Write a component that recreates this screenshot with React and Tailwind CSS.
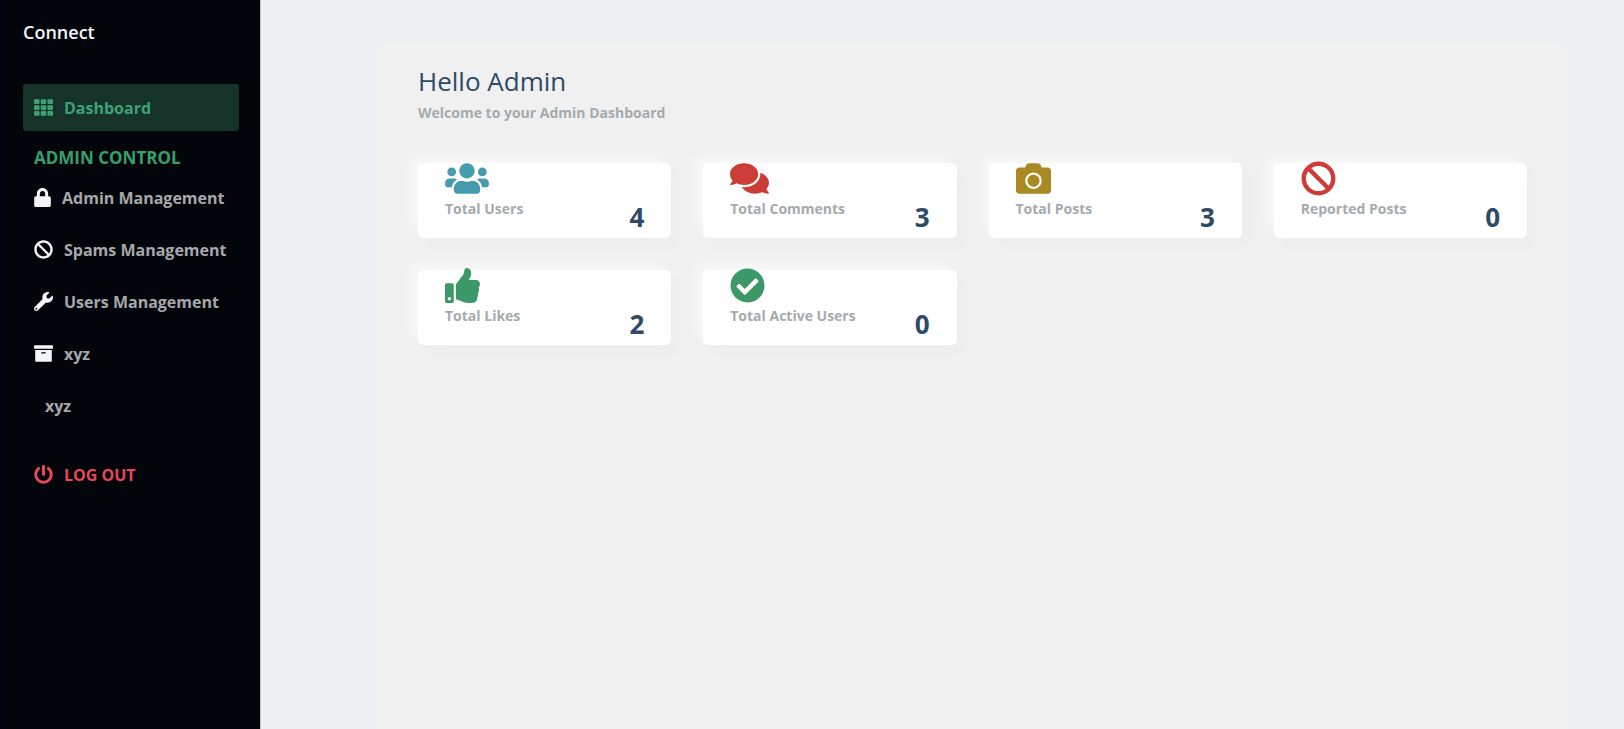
import React from "react";
import {
  FaTh,
  FaLock,
  FaBan,
  FaWrench,
  FaArchive,
  FaPowerOff,
  FaUsers,
  FaComments,
  FaCamera,
  FaThumbsUp,
  FaCheckCircle,
} from "react-icons/fa";

const links = [
  { label: "Admin Management", Icon: FaLock, size: "w-[17px]" },
  { label: "Spams Management", Icon: FaBan, size: "w-[19px]" },
  { label: "Users Management", Icon: FaWrench, size: "w-[19px]" },
  { label: "xyz", Icon: FaArchive, size: "w-[19px]" },
  { label: "xyz", Icon: null },
];

const stats = [
  { label: "Total Users", value: 4, Icon: FaUsers, look: "w-11 text-[#469cac]" },
  { label: "Total Comments", value: 3, Icon: FaComments, look: "w-[39px] text-[#cc3d38]" },
  { label: "Total Posts", value: 3, Icon: FaCamera, look: "w-[35px] text-[#a98921]" },
  { label: "Reported Posts", value: 0, Icon: FaBan, look: "w-[35px] text-[#cc3d38]" },
  { label: "Total Likes", value: 2, Icon: FaThumbsUp, look: "w-[35px] text-[#3d9868]" },
  { label: "Total Active Users", value: 0, Icon: FaCheckCircle, look: "w-[35px] text-[#3d9868]" },
];

function Sidebar() {
  return (
    <aside className="w-[260px] shrink-0 border-l-2 border-[#02031a] bg-[#020509] px-[21px] pt-5">
      <h1 className="text-lg leading-6 font-semibold text-[#f3f4f6]">Connect</h1>
      <nav className="mt-10 flex flex-col text-base font-bold">
        <a
          href="#dashboard"
          className="flex h-[47px] items-center gap-[11px] rounded-[3px] bg-[#16332a] px-[11px] text-[#3ea175]"
        >
          <FaTh size={19} />
          Dashboard
        </a>
        <h2 className="mt-[15px] px-[11px] text-[17px] leading-6 whitespace-nowrap text-[#36a06c]">ADMIN CONTROL</h2>
        <ul className="mt-1 flex flex-col gap-[5px]">
          {links.map(({ label, Icon, size }, i) => (
            <li key={i}>
              <a href="#section" className="flex h-[47px] items-center gap-[11px] px-[11px] whitespace-nowrap text-[#a6a8ab]">
                {Icon ? <Icon className={`h-[19px] shrink-0 text-[#f3f5f8] ${size}`} /> : <span />}
                {label}
              </a>
            </li>
          ))}
        </ul>
        <button type="button" className="mt-[22px] flex h-[47px] items-center gap-[11px] px-[11px] text-left text-[#e8485a]">
          <FaPowerOff size={19} />
          LOG OUT
        </button>
      </nav>
    </aside>
  );
}

function StatCard({ label, value, Icon, look }) {
  return (
    <article className="flex h-[75px] items-end justify-between rounded-[5px] bg-white px-[27px] shadow-[8px_8px_16px_rgba(70,70,70,0.015),-8px_-8px_12px_rgba(255,255,255,0.5)]">
      <div className="flex h-[77px] flex-col items-start">
        <Icon className={`h-[35px] ${look}`} />
        <p className="text-sm leading-[26px] font-bold text-[#a5aaad]">{label}</p>
      </div>
      <p className="text-[26px] leading-[42px] font-bold text-[#2e4a66]">{value}</p>
    </article>
  );
}

export default function App() {
  return (
    <div className="flex min-h-screen bg-[#edeff3] font-['Open_Sans','Noto_Sans',sans-serif]">
      <Sidebar />
      <main className="flex flex-1 border-l border-[#c4c6ca] pt-[45px] pr-[59px] pl-[119px]">
        <section className="flex-1 bg-[#f0f0f0] px-[38px] pt-4">
          <h2 className="text-[26px] leading-10 text-[#2e4a66]">Hello Admin</h2>
          <p className="text-sm leading-6 font-bold text-[#a5aaad]">Welcome to your Admin Dashboard</p>
          <div className="mt-[38px] grid grid-cols-4 gap-8">
            {stats.map((s) => (
              <StatCard key={s.label} {...s} />
            ))}
          </div>
        </section>
      </main>
    </div>
  );
}
